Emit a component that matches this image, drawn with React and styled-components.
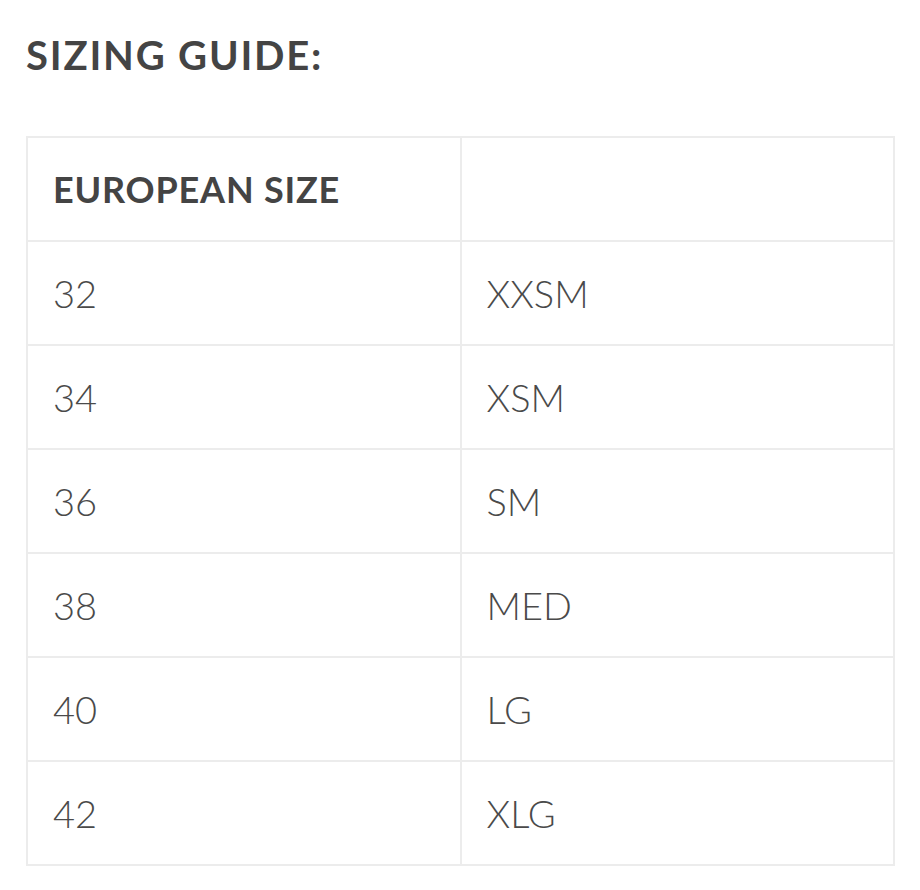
import React from "react";
import styled, { createGlobalStyle } from "styled-components";

const sizes = [
	["32", "XXSM"],
	["34", "XSM"],
	["36", "SM"],
	["38", "MED"],
	["40", "LG"],
	["42", "XLG"]
];

export default function App() {
	return (
		<Wrapper>
			<GlobalStyle />
			<Title>SIZING GUIDE:</Title>
			<SizeTable>
				<thead>
					<tr>
						<HeadCell>EUROPEAN SIZE</HeadCell>
						<HeadCell></HeadCell>
					</tr>
				</thead>
				<tbody>
					{sizes.map(([eu, label]) => (
						<tr key={eu}>
							<Cell>{eu}</Cell>
							<Cell>{label}</Cell>
						</tr>
					))}
				</tbody>
			</SizeTable>
		</Wrapper>
	);
}

const GlobalStyle = createGlobalStyle`
	body {
		margin: 0;
		background: #fff;
		font-family: Lato, "Noto Sans", sans-serif;
	}
`;

const Wrapper = styled.div`
	padding: 0 25px 0 26px;
	width: 920px;
	box-sizing: border-box;
`;

const Title = styled.h2`
	margin: 0;
	padding-top: 32px;
	height: 136px;
	box-sizing: border-box;
	font-size: 40px;
	font-weight: 700;
	color: #444;
	letter-spacing: 1.8px;
	line-height: 46px;
`;

const SizeTable = styled.table`
	width: 869px;
	border-collapse: collapse;
	table-layout: fixed;
	border: 2px solid #ececec;
`;

const Cell = styled.td`
	height: 104px;
	padding: 0 0 0 25px;
	border: 2px solid #ececec;
	font-size: 38px;
	font-weight: 300;
	color: #4a4a4a;
	vertical-align: middle;
	box-sizing: border-box;
`;

const HeadCell = styled(Cell).attrs({ as: "th" })`
	text-align: left;
	font-weight: 700;
	font-size: 36px;
	color: #444;
	letter-spacing: 0.8px;
`;
